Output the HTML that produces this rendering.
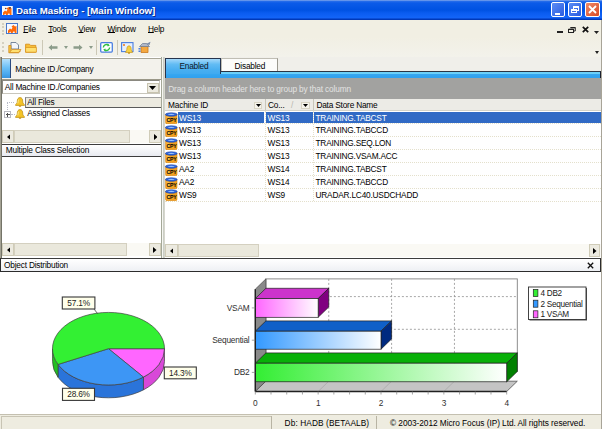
<!DOCTYPE html>
<html><head><meta charset="utf-8">
<style>
*{margin:0;padding:0;box-sizing:border-box}
html,body{width:602px;height:429px;overflow:hidden;background:#ECE9D8;font-family:"Liberation Sans",sans-serif;font-size:8.3px;letter-spacing:-0.2px;color:#000}
.a{position:absolute}
.t{position:absolute;white-space:nowrap;line-height:1}
</style></head><body>
<div class="a" style="left:0;top:0;width:602px;height:429px;overflow:hidden">

<!-- TITLE BAR -->
<div class="a" style="left:0;top:0;width:602px;height:20px;background:linear-gradient(to bottom,#9DB9EB 0px,#2A6FEA 1px,#0C5BE8 3px,#0052E2 10px,#0A5CF0 13px,#1465F8 18px,#0038B8 19px,#0038B8 20px)"></div>
<svg class="a" style="left:2px;top:5.5px" width="11" height="9.5" viewBox="0 0 11 9.5"><rect x="0" y="0" width="10.8" height="9.2" fill="#F4F8FF"/><path d="M1 9V6.5L3 4.5L4.5 5.5L5.5 3.5L4.5 2.5L6.5 1L8 2.5L9.5 2V9H8L7 7L5.5 9H4L3.5 7.5L2 9Z" fill="#FF6A08"/><circle cx="8" cy="1.8" r="0.9" fill="#301010"/><circle cx="3.8" cy="2.5" r="0.7" fill="#602010"/></svg>
<div class="t" style="left:16px;top:6px;font-size:9.7px;font-weight:bold;letter-spacing:0;color:#fff;text-shadow:1px 1px 0 #0A2A8A">Data Masking - [Main Window]</div>
<!-- window buttons -->
<div class="a" style="left:551px;top:2px;width:14px;height:15px;border:1px solid #fff;border-radius:2px;background:linear-gradient(135deg,#5C8DF5,#2A5CE0)"></div>
<div class="a" style="left:554.5px;top:12.5px;width:5px;height:2px;background:#fff"></div>
<div class="a" style="left:568px;top:2px;width:14px;height:15px;border:1px solid #fff;border-radius:2px;background:linear-gradient(135deg,#5C8DF5,#2A5CE0)"></div>
<div class="a" style="left:573px;top:6px;width:5.5px;height:4.5px;border:1px solid #fff;border-top-width:2px"></div>
<div class="a" style="left:571px;top:8.5px;width:5.5px;height:4.5px;border:1px solid #fff;border-top-width:2px;background:#3A6AE8"></div>
<div class="a" style="left:585px;top:2px;width:15px;height:15px;border:1px solid #fff;border-radius:2px;background:linear-gradient(135deg,#F08A6A,#D84A22)"></div>
<svg class="a" style="left:588px;top:5px" width="9" height="9" viewBox="0 0 9 9"><path d="M1 1L8 8M8 1L1 8" stroke="#fff" stroke-width="1.8"/></svg>

<!-- MENU BAR -->
<div class="a" style="left:0;top:20px;width:602px;height:17px;background:#F1EFE3"></div>
<div class="a" style="left:2px;top:23px;width:2px;height:12px;border-left:2px dotted #D4D0C0"></div>
<svg class="a" style="left:6px;top:23px" width="12" height="11" viewBox="0 0 12 11"><rect x="0.5" y="0.5" width="11" height="10" fill="#F4F8FF" stroke="#4A78C8"/><path d="M2 10V7.5L4 5.5L5.5 6.5L6.5 4.5L5.5 3.5L7.5 2L9 3.5L10.5 3V10H9L8 8L6.5 10H5L4.5 8.5L3 10Z" fill="#FF6A08"/></svg>
<div class="t" style="left:23.3px;top:25.4px;font-size:8.3px"><u style="text-decoration-thickness:1px;text-underline-offset:0px">F</u>ile</div>
<div class="t" style="left:48.2px;top:25.4px;font-size:8.3px"><u style="text-decoration-thickness:1px;text-underline-offset:0px">T</u>ools</div>
<div class="t" style="left:78.3px;top:25.4px;font-size:8.3px"><u style="text-decoration-thickness:1px;text-underline-offset:0px">V</u>iew</div>
<div class="t" style="left:107.4px;top:25.4px;font-size:8.3px"><u style="text-decoration-thickness:1px;text-underline-offset:0px">W</u>indow</div>
<div class="t" style="left:148px;top:25.4px;font-size:8.3px"><u style="text-decoration-thickness:1px;text-underline-offset:0px">H</u>elp</div>
<div class="a" style="left:557px;top:31px;width:5.5px;height:2px;background:#222"></div>
<svg class="a" style="left:568px;top:27px" width="8" height="6" viewBox="0 0 8 6"><path d="M2.5 0.75H7.25V4H6" fill="none" stroke="#222" stroke-width="1"/><path d="M2.5 0.5H7.5" stroke="#222" stroke-width="1.2"/><rect x="0.5" y="2.5" width="5" height="3" fill="none" stroke="#222" stroke-width="1"/><path d="M0.5 2.3H5.5" stroke="#222" stroke-width="1.3"/></svg>
<svg class="a" style="left:582px;top:26px" width="7" height="7" viewBox="0 0 7 7"><path d="M0.8 0.8L6.2 6.2M6.2 0.8L0.8 6.2" stroke="#111" stroke-width="1.7"/></svg>
<svg class="a" style="left:594px;top:31px" width="5" height="3" viewBox="0 0 5 3"><path d="M0 0H5L2.5 3Z" fill="#222"/></svg>

<!-- TOOLBAR -->
<div class="a" style="left:0;top:37px;width:602px;height:20px;background:linear-gradient(to bottom,#F1EFE3,#F3F2EB)"></div>
<div class="a" style="left:2px;top:42px;width:2px;height:10px;border-left:2px dotted #D4D0C0"></div>
<svg class="a" style="left:8px;top:41px" width="14" height="13" viewBox="0 0 14 13"><path d="M3 1.5H8L10.5 4V8H3Z" fill="#F4F6FA" stroke="#6A7A90" stroke-width="0.9"/><path d="M0.8 4.5H3V10H12.5L10.5 11.8H0.8Z" fill="#F8C840" stroke="#D08A20" stroke-width="0.8"/><path d="M1.5 11.5L4 8.5H13L10.5 11.5Z" fill="#FFE070" stroke="#D08A20" stroke-width="0.7"/></svg>
<svg class="a" style="left:25px;top:43px" width="12" height="10" viewBox="0 0 12 10"><path d="M0.6 1.2H4.5L5.5 2.4H10.8V9.2H0.6Z" fill="#F8C038" stroke="#D8901C" stroke-width="0.9"/><path d="M0.6 4.5H11.4V9.2H0.6Z" fill="#FFE070" stroke="#D8901C" stroke-width="0.7"/></svg>
<div class="a" style="left:42px;top:40px;width:1px;height:15px;background:#CCC8B6"></div>
<svg class="a" style="left:48px;top:44px" width="10" height="7" viewBox="0 0 10 7"><path d="M0.5 3.5L4 0.5V2.2H9.5V4.8H4V6.5Z" fill="#8C9C8A"/></svg>
<svg class="a" style="left:64px;top:46px" width="4" height="3" viewBox="0 0 4 3"><path d="M0 0H4L2 3Z" fill="#8C9C8A"/></svg>
<svg class="a" style="left:72.5px;top:44px" width="10" height="7" viewBox="0 0 10 7"><path d="M9.5 3.5L6 0.5V2.2H0.5V4.8H6V6.5Z" fill="#8C9C8A"/></svg>
<svg class="a" style="left:88.5px;top:46px" width="4" height="3" viewBox="0 0 4 3"><path d="M0 0H4L2 3Z" fill="#8C9C8A"/></svg>
<div class="a" style="left:95.5px;top:40px;width:1px;height:15px;background:#CCC8B6"></div>
<svg class="a" style="left:99.5px;top:41.5px" width="13" height="11" viewBox="0 0 13 11"><rect x="0.7" y="0.7" width="11.6" height="9.4" rx="1" fill="#FFFFFF" stroke="#4A7EE0" stroke-width="1.3"/><path d="M3.5 5.5A3 2.6 0 0 1 8.5 3.2" fill="none" stroke="#30C040" stroke-width="1.5"/><path d="M9.5 5.5A3 2.6 0 0 1 4.5 7.8" fill="none" stroke="#30C040" stroke-width="1.5"/><path d="M7.5 1.6L9.8 3.4L7.6 4.6Z" fill="#30C040"/><path d="M5.5 9.4L3.2 7.6L5.4 6.4Z" fill="#30C040"/></svg>
<div class="a" style="left:117px;top:40px;width:1px;height:15px;background:#CCC8B6"></div>
<svg class="a" style="left:121px;top:42px" width="13" height="12" viewBox="0 0 13 12"><rect x="0.6" y="0.6" width="11.4" height="9" fill="#E8F0FC" stroke="#4A7EE0" stroke-width="1.1"/><circle cx="3" cy="3" r="1.1" fill="#F08020"/><path d="M8 3.8C6.2 3.8 5.8 6 5.8 7.5L4.5 10.5H11.5L10.2 7.5C10.2 6 9.8 3.8 8 3.8Z" fill="#F6D040" stroke="#C89010" stroke-width="0.6"/><circle cx="8" cy="11" r="0.9" fill="#C89010"/></svg>
<svg class="a" style="left:138px;top:41px" width="14" height="12" viewBox="0 0 14 12"><path d="M3 5H10V11.5H3Z" fill="#F4A840" stroke="#C87820" stroke-width="0.8"/><path d="M1.5 5.5L4.5 2.5H8.5L11.5 5.5Z" fill="#B0B8C8" stroke="#6A7890" stroke-width="0.7"/><path d="M8 3L12.5 0.8L11.5 4Z" fill="#7A8AA8"/><rect x="0.5" y="7" width="2" height="1.5" fill="#4A7EE0"/><rect x="0.5" y="9.5" width="2" height="1.5" fill="#4A7EE0"/></svg>
<svg class="a" style="left:594.5px;top:50.5px" width="4" height="3" viewBox="0 0 4 3"><path d="M0 0H4L2 3Z" fill="#222"/></svg>

<!-- LEFT PANEL -->
<div class="a" style="left:0;top:57px;width:162px;height:201px;background:#fff;border-left:1px solid #A4A294"></div>
<!-- header Machine ID -->
<div class="a" style="left:1px;top:58px;width:161px;height:22px;background:#F3F2EC;border-top:1px solid #A8A698;border-bottom:1px solid #9A9888"></div>
<div class="a" style="left:2px;top:59px;width:9px;height:19px;background:linear-gradient(to bottom,#B4E0FC,#6CC0F6 45%,#48A8EE 80%,#3A94DC);border-right:1px solid #2A4A80"></div>
<div class="t" style="left:15.2px;top:64.7px">Machine ID./Company</div>
<!-- combo -->
<div class="a" style="left:2px;top:80px;width:157.5px;height:14px;background:#fff;border:1px solid #8A8880;border-right-color:#C8C6BC;border-bottom-color:#C8C6BC"></div>
<div class="t" style="left:4.7px;top:83.3px">All Machine ID./Companies</div>
<div class="a" style="left:146.5px;top:83px;width:12px;height:10px;background:#ECEAE0;border:1px solid #C8C4B0"></div>
<svg class="a" style="left:149px;top:86px" width="7" height="4" viewBox="0 0 7 4"><path d="M0 0H7L3.5 4Z" fill="#000"/></svg>
<!-- tree -->
<div class="a" style="left:7px;top:102px;width:7px;height:0;border-top:1px dotted #B8BCC8"></div>
<div class="a" style="left:7px;top:102px;width:0;height:10px;border-left:1px dotted #B8BCC8"></div>
<div class="a" style="left:25px;top:97px;width:136.5px;height:10.5px;background:#ECEAE0;border:1px solid #5A5A5A;border-top-color:#A0A0A0;border-left-color:#808080"></div>
<svg class="a" style="left:15px;top:96.8px" width="10" height="10" viewBox="0 0 10 10"><path d="M5 0.6C3 0.6 2.3 2.4 2.3 4.2C2.3 6 1.6 6.8 0.6 7.6V8.4H9.4V7.6C8.4 6.8 7.7 6 7.7 4.2C7.7 2.4 7 0.6 5 0.6Z" fill="#F4C428" stroke="#B88A10" stroke-width="0.7"/><path d="M3.4 2.6C3.2 3.5 3.2 5 2.8 6.4" stroke="#FFF0A0" stroke-width="0.8" fill="none"/><ellipse cx="5" cy="9.1" rx="1.3" ry="0.8" fill="#D09A18"/></svg>
<div class="t" style="left:27.2px;top:97.6px">All Files</div>
<div class="a" style="left:4px;top:111px;width:7px;height:7px;border:1px solid #B8B8C0;background:#fff"></div>
<div class="a" style="left:5.5px;top:114px;width:4px;height:1px;background:#505050"></div>
<div class="a" style="left:7px;top:112.5px;width:1px;height:4px;background:#505050"></div>
<div class="a" style="left:11px;top:114px;width:4px;height:0;border-top:1px dotted #B8BCC8"></div>
<svg class="a" style="left:15px;top:109.2px" width="10" height="10" viewBox="0 0 10 10"><path d="M5 0.6C3 0.6 2.3 2.4 2.3 4.2C2.3 6 1.6 6.8 0.6 7.6V8.4H9.4V7.6C8.4 6.8 7.7 6 7.7 4.2C7.7 2.4 7 0.6 5 0.6Z" fill="#F4C428" stroke="#B88A10" stroke-width="0.7"/><path d="M3.4 2.6C3.2 3.5 3.2 5 2.8 6.4" stroke="#FFF0A0" stroke-width="0.8" fill="none"/><ellipse cx="5" cy="9.1" rx="1.3" ry="0.8" fill="#D09A18"/></svg>
<div class="t" style="left:27.2px;top:109.4px">Assigned Classes</div>
<!-- scrollbar 1 -->
<div class="a" style="left:1px;top:130px;width:161px;height:12.5px;background:#FAF9F4"></div>
<div class="a" style="left:2px;top:130px;width:12px;height:12.5px;background:#ECEAE0;border:1px solid #D0CCB8"></div>
<svg class="a" style="left:6.5px;top:133.5px" width="3.5" height="6" viewBox="0 0 3.5 6"><path d="M3.5 0V6L0 3Z" fill="#000"/></svg>
<div class="a" style="left:14px;top:130px;width:115.5px;height:12.5px;background:#EAE8DC;border:1px solid #D4D0C0"></div>
<div class="a" style="left:148.6px;top:130px;width:12.7px;height:12.5px;background:#ECEAE0;border:1px solid #D0CCB8"></div>
<svg class="a" style="left:153.5px;top:133.5px" width="3.5" height="6" viewBox="0 0 3.5 6"><path d="M0 0V6L3.5 3Z" fill="#000"/></svg>
<!-- Multiple class selection header -->
<div class="a" style="left:1px;top:143.5px;width:160.5px;height:13px;background:linear-gradient(to bottom,#FFFFFF,#E8EAF0);border:1px solid #3C3C3C;border-left-color:#909090"></div>
<div class="t" style="left:5.8px;top:146.3px">Multiple Class Selection</div>
<!-- scrollbar 2 -->
<div class="a" style="left:1px;top:243px;width:161px;height:13px;background:#FAF9F4"></div>
<div class="a" style="left:2px;top:243px;width:12px;height:13px;background:#ECEAE0;border:1px solid #D0CCB8"></div>
<svg class="a" style="left:6.5px;top:246.5px" width="3.5" height="6" viewBox="0 0 3.5 6"><path d="M3.5 0V6L0 3Z" fill="#000"/></svg>
<div class="a" style="left:14px;top:243px;width:112.6px;height:13px;background:#EAE8DC;border:1px solid #D4D0C0"></div>
<div class="a" style="left:148.6px;top:243px;width:12px;height:13px;background:#ECEAE0;border:1px solid #D0CCB8"></div>
<svg class="a" style="left:153.0px;top:246.5px" width="3.5" height="6" viewBox="0 0 3.5 6"><path d="M0 0V6L3.5 3Z" fill="#000"/></svg>

<div class="a" style="left:0;top:57px;width:1px;height:201px;background:#A4A294"></div><div class="a" style="left:1px;top:57px;width:1px;height:201px;background:#747468"></div>
<!-- splitter -->
<div class="a" style="left:161px;top:57px;width:1px;height:201px;background:#A4A898"></div><div class="a" style="left:162px;top:57px;width:1px;height:201px;background:#F6F6F2"></div><div class="a" style="left:163px;top:57px;width:1px;height:201px;background:#CACEC4"></div>

<!-- RIGHT PANEL -->
<div class="a" style="left:164px;top:57px;width:437px;height:201px;background:#fff;border-left:1px solid #D6D6CE"></div>
<div class="a" style="left:165px;top:57px;width:436px;height:15px;background:#F0EFEA"></div>
<div class="a" style="left:221.4px;top:57.6px;width:57px;height:14.4px;background:#FCFCFA;border:1px solid #C0BEB4;border-right-color:#9A988E;border-bottom:none"></div>
<div class="t" style="left:234.5px;top:62.3px">Disabled</div>
<div class="a" style="left:165px;top:71px;width:436px;height:7.5px;background:linear-gradient(to bottom,#6CD0FA 0px,#6CD0FA 1.5px,#36A6F0 2.5px,#30A0EE 100%);border:1px solid #2A3444;border-right-color:#1A2030"></div>
<div class="a" style="left:165.2px;top:57.5px;width:56.2px;height:16px;background:linear-gradient(to bottom,#A4D8FA 0%,#62BCF4 35%,#48AEF0 75%,#40AAF0 100%);border:1px solid #26344E;border-bottom:none"></div>
<div class="t" style="left:179.4px;top:62.3px;color:#101828">Enabled</div>
<div class="a" style="left:165px;top:78px;width:436px;height:21px;background:#A2A2A0"></div>
<div class="t" style="left:168.2px;top:84.7px;color:#E2E2E2;font-size:8.3px;letter-spacing:-0.15px">Drag a column header here to group by that column</div>
<!-- column header -->
<div class="a" style="left:165px;top:98.5px;width:436px;height:12.6px;background:#ECEBE6;border-bottom:1px solid #D4D2C8"></div>
<div class="t" style="left:168.1px;top:100.7px">Machine ID</div>
<div class="a" style="left:254px;top:101.5px;width:8.4px;height:7.5px;background:#F6F4EC;border:1px solid #D8D4C4"></div>
<svg class="a" style="left:255.5px;top:104px" width="5" height="3" viewBox="0 0 5 3"><path d="M0 0H5L2.5 3Z" fill="#000"/></svg>
<div class="a" style="left:264.5px;top:99px;width:1px;height:11px;background:#C8C6BA"></div>
<div class="t" style="left:268px;top:100.7px">Co...</div>
<div class="t" style="left:291px;top:100.7px;color:#B8B6AE">/</div>
<div class="a" style="left:300.6px;top:101.5px;width:9px;height:7.5px;background:#F6F4EC;border:1px solid #D8D4C4"></div>
<svg class="a" style="left:302.5px;top:104px" width="5" height="3" viewBox="0 0 5 3"><path d="M0 0H5L2.5 3Z" fill="#000"/></svg>
<div class="a" style="left:312.5px;top:99px;width:1px;height:11px;background:#C8C6BA"></div>
<div class="t" style="left:316.4px;top:100.7px">Data Store Name</div>
<!-- rows -->
<div id="rows"><div class="a" style="left:178px;top:111.70px;width:86px;height:11.6px;background:#316AC5"></div>
<div class="a" style="left:266px;top:111.70px;width:46.5px;height:11.6px;background:#316AC5"></div>
<div class="a" style="left:313.5px;top:111.70px;width:287.5px;height:11.6px;background:#316AC5"></div>
<div class="a" style="left:165px;top:123.32px;width:436px;height:0;border-top:1px dotted #E4E0CC"></div>
<svg class="a" style="left:165.2px;top:111.90px" width="12.6" height="12" viewBox="0 0 12.6 12"><path d="M0.6 2.6V10.2Q0.6 11.7 2.2 11.7H10.4Q12 11.7 12 10.2V2.6Z" fill="#F2A020" stroke="#D88410" stroke-width="0.6"/><rect x="1.4" y="4" width="3" height="6.5" fill="#FFC850" opacity="0.6"/><ellipse cx="6.3" cy="2.5" rx="5.9" ry="1.8" fill="#2A62DC" stroke="#173C98" stroke-width="0.5"/><ellipse cx="6.3" cy="2.3" rx="3.4" ry="0.6" fill="#9CC4FA"/><text x="1.6" y="9.8" font-family="Liberation Sans" font-size="5.2" font-weight="bold" fill="#000" letter-spacing="-0.3">CPY</text></svg>
<div class="t" style="left:179px;top:113.50px;color:#fff">WS13</div>
<div class="t" style="left:267.5px;top:113.50px;color:#fff">WS13</div>
<div class="t" style="left:315.5px;top:113.50px;color:#fff">TRAINING.TABCST</div>
<div class="a" style="left:165px;top:136.24px;width:436px;height:0;border-top:1px dotted #E4E0CC"></div>
<svg class="a" style="left:165.2px;top:124.82px" width="12.6" height="12" viewBox="0 0 12.6 12"><path d="M0.6 2.6V10.2Q0.6 11.7 2.2 11.7H10.4Q12 11.7 12 10.2V2.6Z" fill="#F2A020" stroke="#D88410" stroke-width="0.6"/><rect x="1.4" y="4" width="3" height="6.5" fill="#FFC850" opacity="0.6"/><ellipse cx="6.3" cy="2.5" rx="5.9" ry="1.8" fill="#2A62DC" stroke="#173C98" stroke-width="0.5"/><ellipse cx="6.3" cy="2.3" rx="3.4" ry="0.6" fill="#9CC4FA"/><text x="1.6" y="9.8" font-family="Liberation Sans" font-size="5.2" font-weight="bold" fill="#000" letter-spacing="-0.3">CPY</text></svg>
<div class="t" style="left:179px;top:126.42px;color:#000">WS13</div>
<div class="t" style="left:267.5px;top:126.42px;color:#000">WS13</div>
<div class="t" style="left:315.5px;top:126.42px;color:#000">TRAINING.TABCCD</div>
<div class="a" style="left:165px;top:149.16px;width:436px;height:0;border-top:1px dotted #E4E0CC"></div>
<svg class="a" style="left:165.2px;top:137.74px" width="12.6" height="12" viewBox="0 0 12.6 12"><path d="M0.6 2.6V10.2Q0.6 11.7 2.2 11.7H10.4Q12 11.7 12 10.2V2.6Z" fill="#F2A020" stroke="#D88410" stroke-width="0.6"/><rect x="1.4" y="4" width="3" height="6.5" fill="#FFC850" opacity="0.6"/><ellipse cx="6.3" cy="2.5" rx="5.9" ry="1.8" fill="#2A62DC" stroke="#173C98" stroke-width="0.5"/><ellipse cx="6.3" cy="2.3" rx="3.4" ry="0.6" fill="#9CC4FA"/><text x="1.6" y="9.8" font-family="Liberation Sans" font-size="5.2" font-weight="bold" fill="#000" letter-spacing="-0.3">CPY</text></svg>
<div class="t" style="left:179px;top:139.34px;color:#000">WS13</div>
<div class="t" style="left:267.5px;top:139.34px;color:#000">WS13</div>
<div class="t" style="left:315.5px;top:139.34px;color:#000">TRAINING.SEQ.LON</div>
<div class="a" style="left:165px;top:162.08px;width:436px;height:0;border-top:1px dotted #E4E0CC"></div>
<svg class="a" style="left:165.2px;top:150.66px" width="12.6" height="12" viewBox="0 0 12.6 12"><path d="M0.6 2.6V10.2Q0.6 11.7 2.2 11.7H10.4Q12 11.7 12 10.2V2.6Z" fill="#F2A020" stroke="#D88410" stroke-width="0.6"/><rect x="1.4" y="4" width="3" height="6.5" fill="#FFC850" opacity="0.6"/><ellipse cx="6.3" cy="2.5" rx="5.9" ry="1.8" fill="#2A62DC" stroke="#173C98" stroke-width="0.5"/><ellipse cx="6.3" cy="2.3" rx="3.4" ry="0.6" fill="#9CC4FA"/><text x="1.6" y="9.8" font-family="Liberation Sans" font-size="5.2" font-weight="bold" fill="#000" letter-spacing="-0.3">CPY</text></svg>
<div class="t" style="left:179px;top:152.26px;color:#000">WS13</div>
<div class="t" style="left:267.5px;top:152.26px;color:#000">WS13</div>
<div class="t" style="left:315.5px;top:152.26px;color:#000">TRAINING.VSAM.ACC</div>
<div class="a" style="left:165px;top:175.00px;width:436px;height:0;border-top:1px dotted #E4E0CC"></div>
<svg class="a" style="left:165.2px;top:163.58px" width="12.6" height="12" viewBox="0 0 12.6 12"><path d="M0.6 2.6V10.2Q0.6 11.7 2.2 11.7H10.4Q12 11.7 12 10.2V2.6Z" fill="#F2A020" stroke="#D88410" stroke-width="0.6"/><rect x="1.4" y="4" width="3" height="6.5" fill="#FFC850" opacity="0.6"/><ellipse cx="6.3" cy="2.5" rx="5.9" ry="1.8" fill="#2A62DC" stroke="#173C98" stroke-width="0.5"/><ellipse cx="6.3" cy="2.3" rx="3.4" ry="0.6" fill="#9CC4FA"/><text x="1.6" y="9.8" font-family="Liberation Sans" font-size="5.2" font-weight="bold" fill="#000" letter-spacing="-0.3">CPY</text></svg>
<div class="t" style="left:179px;top:165.18px;color:#000">AA2</div>
<div class="t" style="left:267.5px;top:165.18px;color:#000">WS14</div>
<div class="t" style="left:315.5px;top:165.18px;color:#000">TRAINING.TABCST</div>
<div class="a" style="left:165px;top:187.92px;width:436px;height:0;border-top:1px dotted #E4E0CC"></div>
<svg class="a" style="left:165.2px;top:176.50px" width="12.6" height="12" viewBox="0 0 12.6 12"><path d="M0.6 2.6V10.2Q0.6 11.7 2.2 11.7H10.4Q12 11.7 12 10.2V2.6Z" fill="#F2A020" stroke="#D88410" stroke-width="0.6"/><rect x="1.4" y="4" width="3" height="6.5" fill="#FFC850" opacity="0.6"/><ellipse cx="6.3" cy="2.5" rx="5.9" ry="1.8" fill="#2A62DC" stroke="#173C98" stroke-width="0.5"/><ellipse cx="6.3" cy="2.3" rx="3.4" ry="0.6" fill="#9CC4FA"/><text x="1.6" y="9.8" font-family="Liberation Sans" font-size="5.2" font-weight="bold" fill="#000" letter-spacing="-0.3">CPY</text></svg>
<div class="t" style="left:179px;top:178.10px;color:#000">AA2</div>
<div class="t" style="left:267.5px;top:178.10px;color:#000">WS14</div>
<div class="t" style="left:315.5px;top:178.10px;color:#000">TRAINING.TABCCD</div>
<div class="a" style="left:165px;top:200.84px;width:436px;height:0;border-top:1px dotted #E4E0CC"></div>
<svg class="a" style="left:165.2px;top:189.42px" width="12.6" height="12" viewBox="0 0 12.6 12"><path d="M0.6 2.6V10.2Q0.6 11.7 2.2 11.7H10.4Q12 11.7 12 10.2V2.6Z" fill="#F2A020" stroke="#D88410" stroke-width="0.6"/><rect x="1.4" y="4" width="3" height="6.5" fill="#FFC850" opacity="0.6"/><ellipse cx="6.3" cy="2.5" rx="5.9" ry="1.8" fill="#2A62DC" stroke="#173C98" stroke-width="0.5"/><ellipse cx="6.3" cy="2.3" rx="3.4" ry="0.6" fill="#9CC4FA"/><text x="1.6" y="9.8" font-family="Liberation Sans" font-size="5.2" font-weight="bold" fill="#000" letter-spacing="-0.3">CPY</text></svg>
<div class="t" style="left:179px;top:191.02px;color:#000">WS9</div>
<div class="t" style="left:267.5px;top:191.02px;color:#000">WS9</div>
<div class="t" style="left:315.5px;top:191.02px;color:#000">URADAR.LC40.USDCHADD</div>
<div class="a" style="left:264.5px;top:111px;width:0;height:90px;border-left:1px dotted #E4E0CC"></div>
<div class="a" style="left:312.5px;top:111px;width:0;height:90px;border-left:1px dotted #E4E0CC"></div></div><!--/rows-->
<!-- right scrollbar -->
<div class="a" style="left:165px;top:244.4px;width:436px;height:12.3px;background:#FAF9F4"></div>
<div class="a" style="left:165px;top:244.4px;width:13px;height:12.3px;background:#ECEAE0;border:1px solid #D0CCB8"></div>
<svg class="a" style="left:169.5px;top:247.8px" width="3.5" height="6" viewBox="0 0 3.5 6"><path d="M3.5 0V6L0 3Z" fill="#000"/></svg>
<div class="a" style="left:178px;top:244.4px;width:81px;height:12.3px;background:#EAE8DC;border:1px solid #D4D0C0"></div>
<div class="a" style="left:588.5px;top:244.4px;width:11.5px;height:12.3px;background:#ECEAE0;border:1px solid #D0CCB8"></div>
<svg class="a" style="left:593.0px;top:247.8px" width="3.5" height="6" viewBox="0 0 3.5 6"><path d="M0 0V6L3.5 3Z" fill="#000"/></svg>

<!-- OBJECT DISTRIBUTION -->
<div class="a" style="left:0;top:258px;width:601px;height:13.6px;background:linear-gradient(to bottom,#FFFFFF,#EEF0F4);border:1px solid #2C2C2C;border-top-color:#3C3C3C"></div>
<div class="t" style="left:4px;top:260.9px">Object Distribution</div>
<svg class="a" style="left:586.5px;top:261.5px" width="7" height="7" viewBox="0 0 7 7"><path d="M0.8 0.8L6.2 6.2M6.2 0.8L0.8 6.2" stroke="#111" stroke-width="1.3"/></svg>
<div class="a" style="left:0;top:271.6px;width:601px;height:142.4px;background:#fff"></div>
<div id="charts"><svg class="a" style="left:0;top:0" width="602" height="429" viewBox="0 0 602 429" font-family="Liberation Sans"><defs><linearGradient id="gV" x1="0" y1="0" x2="1" y2="0"><stop offset="0" stop-color="#FF66FF"/><stop offset="1" stop-color="#FFFFFF"/></linearGradient><linearGradient id="gS" x1="0" y1="0" x2="1" y2="0"><stop offset="0" stop-color="#3399FF"/><stop offset="1" stop-color="#FFFFFF"/></linearGradient><linearGradient id="gD" x1="0" y1="0" x2="1" y2="0"><stop offset="0" stop-color="#33EE33"/><stop offset="1" stop-color="#FFFFFF"/></linearGradient></defs><path d="M164.50 348.70 A56.0 36.3 0 0 1 143.41 377.08 L143.41 389.88 A56.0 36.3 0 0 0 164.50 361.50 Z" fill="#D848D8" stroke="#404040" stroke-width="0.7"/>
<path d="M143.41 377.08 A56.0 36.3 0 0 1 58.04 364.45 L58.04 377.25 A56.0 36.3 0 0 0 143.41 389.88 Z" fill="#2A74DA" stroke="#404040" stroke-width="0.7"/>
<path d="M58.04 364.45 A56.0 36.3 0 0 1 52.50 348.70 L52.50 361.50 A56.0 36.3 0 0 0 58.04 377.25 Z" fill="#22C022" stroke="#404040" stroke-width="0.7"/>
<path d="M108.5 348.7 L164.50 348.70 A56.0 36.3 0 0 1 143.41 377.08 Z" fill="#FF66FF" stroke="#404040" stroke-width="0.7"/>
<path d="M108.5 348.7 L143.41 377.08 A56.0 36.3 0 0 1 58.04 364.45 Z" fill="#3D96F5" stroke="#404040" stroke-width="0.7"/>
<path d="M108.5 348.7 L58.04 364.45 A56.0 36.3 0 1 1 164.50 348.70 Z" fill="#33F033" stroke="#404040" stroke-width="0.7"/>
<path d="M94 309L97.5 313.5" stroke="#404040" stroke-width="0.8" fill="none"/>
<rect x="62.3" y="297" width="32.60" height="12.00" fill="#FFFFEA" stroke="#383838" stroke-width="1.1"/>
<text x="78.60" y="306.00" text-anchor="middle" font-size="8.3" fill="#1A1A1A">57.1%</text>
<rect x="164.3" y="367" width="32.00" height="11.80" fill="#FFFFEA" stroke="#383838" stroke-width="1.1"/>
<text x="180.30" y="375.80" text-anchor="middle" font-size="8.3" fill="#1A1A1A">14.3%</text>
<rect x="62.5" y="388.3" width="32.00" height="12.10" fill="#FFFFEA" stroke="#383838" stroke-width="1.1"/>
<text x="78.50" y="397.40" text-anchor="middle" font-size="8.3" fill="#1A1A1A">28.6%</text>
<rect x="265.90000000000003" y="278.9" width="251.39999999999998" height="92.69999999999999" fill="#FFFFFF" stroke="#808080" stroke-width="0.9"/>
<path d="M255.3 289.2 L265.90000000000003 278.9 L265.90000000000003 381.2 L255.3 391.5 Z" fill="#8A8A8A" stroke="#404040" stroke-width="0.7"/>
<path d="M255.3 391.5 L265.90000000000003 381.2 L517.3 381.2 L506.7 391.5 Z" fill="#C4C4C4" stroke="#404040" stroke-width="0.7"/>
<line x1="328.75" y1="278.9" x2="328.75" y2="381.2" stroke="#909090" stroke-width="0.8" stroke-dasharray="2 2"/>
<line x1="318.15" y1="391.5" x2="328.75" y2="381.2" stroke="#A0A0A0" stroke-width="0.6"/>
<line x1="391.60" y1="278.9" x2="391.60" y2="381.2" stroke="#909090" stroke-width="0.8" stroke-dasharray="2 2"/>
<line x1="381.00" y1="391.5" x2="391.60" y2="381.2" stroke="#A0A0A0" stroke-width="0.6"/>
<line x1="454.45" y1="278.9" x2="454.45" y2="381.2" stroke="#909090" stroke-width="0.8" stroke-dasharray="2 2"/>
<line x1="443.85" y1="391.5" x2="454.45" y2="381.2" stroke="#A0A0A0" stroke-width="0.6"/>
<line x1="265.90000000000003" y1="296.6" x2="517.3" y2="296.6" stroke="#909090" stroke-width="0.8" stroke-dasharray="2 2"/>
<line x1="265.90000000000003" y1="329.3" x2="517.3" y2="329.3" stroke="#909090" stroke-width="0.8" stroke-dasharray="2 2"/>
<line x1="265.90000000000003" y1="362.0" x2="517.3" y2="362.0" stroke="#909090" stroke-width="0.8" stroke-dasharray="2 2"/>
<path d="M255.3 298.6 L265.90000000000003 288.3 L328.75 288.3 L318.15 298.6 Z" fill="#CC33CC" stroke="#202020" stroke-width="0.7"/>
<path d="M318.15 298.6 L328.75 288.3 L328.75 307.0 L318.15 317.3 Z" fill="#800080" stroke="#202020" stroke-width="0.7"/>
<rect x="255.3" y="298.6" width="62.85" height="18.70" fill="url(#gV)" stroke="#202020" stroke-width="0.7"/>
<path d="M255.3 331.2 L265.90000000000003 320.9 L391.6 320.9 L381.0 331.2 Z" fill="#1060C8" stroke="#202020" stroke-width="0.7"/>
<path d="M381.0 331.2 L391.6 320.9 L391.6 338.9 L381.0 349.2 Z" fill="#002A80" stroke="#202020" stroke-width="0.7"/>
<rect x="255.3" y="331.2" width="125.70" height="18.00" fill="url(#gS)" stroke="#202020" stroke-width="0.7"/>
<path d="M255.3 363.2 L265.90000000000003 352.9 L517.3 352.9 L506.7 363.2 Z" fill="#08B008" stroke="#202020" stroke-width="0.7"/>
<path d="M506.7 363.2 L517.3 352.9 L517.3 371.5 L506.7 381.8 Z" fill="#008000" stroke="#202020" stroke-width="0.7"/>
<rect x="255.3" y="363.2" width="251.40" height="18.60" fill="url(#gD)" stroke="#202020" stroke-width="0.7"/>
<line x1="255.3" y1="289.2" x2="255.3" y2="391.5" stroke="#202020" stroke-width="1.4"/>
<line x1="255.3" y1="391.5" x2="506.7" y2="391.5" stroke="#202020" stroke-width="1.4"/>
<line x1="255.30" y1="391.5" x2="255.30" y2="394.5" stroke="#808080" stroke-width="0.7"/>
<line x1="271.01" y1="391.5" x2="271.01" y2="394.5" stroke="#808080" stroke-width="0.7"/>
<line x1="286.73" y1="391.5" x2="286.73" y2="394.5" stroke="#808080" stroke-width="0.7"/>
<line x1="302.44" y1="391.5" x2="302.44" y2="394.5" stroke="#808080" stroke-width="0.7"/>
<line x1="318.15" y1="391.5" x2="318.15" y2="394.5" stroke="#808080" stroke-width="0.7"/>
<line x1="333.86" y1="391.5" x2="333.86" y2="394.5" stroke="#808080" stroke-width="0.7"/>
<line x1="349.57" y1="391.5" x2="349.57" y2="394.5" stroke="#808080" stroke-width="0.7"/>
<line x1="365.29" y1="391.5" x2="365.29" y2="394.5" stroke="#808080" stroke-width="0.7"/>
<line x1="381.00" y1="391.5" x2="381.00" y2="394.5" stroke="#808080" stroke-width="0.7"/>
<line x1="396.71" y1="391.5" x2="396.71" y2="394.5" stroke="#808080" stroke-width="0.7"/>
<line x1="412.43" y1="391.5" x2="412.43" y2="394.5" stroke="#808080" stroke-width="0.7"/>
<line x1="428.14" y1="391.5" x2="428.14" y2="394.5" stroke="#808080" stroke-width="0.7"/>
<line x1="443.85" y1="391.5" x2="443.85" y2="394.5" stroke="#808080" stroke-width="0.7"/>
<line x1="459.56" y1="391.5" x2="459.56" y2="394.5" stroke="#808080" stroke-width="0.7"/>
<line x1="475.27" y1="391.5" x2="475.27" y2="394.5" stroke="#808080" stroke-width="0.7"/>
<line x1="490.99" y1="391.5" x2="490.99" y2="394.5" stroke="#808080" stroke-width="0.7"/>
<line x1="506.70" y1="391.5" x2="506.70" y2="394.5" stroke="#808080" stroke-width="0.7"/>
<text x="255.30" y="406" text-anchor="middle" font-size="8.3" fill="#303030">0</text>
<text x="318.15" y="406" text-anchor="middle" font-size="8.3" fill="#303030">1</text>
<text x="381.00" y="406" text-anchor="middle" font-size="8.3" fill="#303030">2</text>
<text x="443.85" y="406" text-anchor="middle" font-size="8.3" fill="#303030">3</text>
<text x="506.70" y="406" text-anchor="middle" font-size="8.3" fill="#303030">4</text>
<line x1="251.8" y1="307.9" x2="255.3" y2="307.9" stroke="#808080" stroke-width="0.7"/>
<text x="249.5" y="310.9" text-anchor="end" font-size="8.3" fill="#303030">VSAM</text>
<line x1="251.8" y1="340.2" x2="255.3" y2="340.2" stroke="#808080" stroke-width="0.7"/>
<text x="249.5" y="343.2" text-anchor="end" font-size="8.3" fill="#303030">Sequential</text>
<line x1="251.8" y1="372.4" x2="255.3" y2="372.4" stroke="#808080" stroke-width="0.7"/>
<text x="249.5" y="375.4" text-anchor="end" font-size="8.3" fill="#303030">DB2</text>
<rect x="529.5" y="288" width="57.5" height="32.5" fill="#505050"/>
<rect x="528.5" y="287" width="57.5" height="32.5" fill="#FFFFFF" stroke="#303030" stroke-width="0.9"/>
<rect x="533.3" y="289.5" width="4.6" height="7" fill="#33EE33" stroke="#202020" stroke-width="0.7"/>
<text x="540.6" y="296.1" font-size="8.2" fill="#202020" letter-spacing="-0.3">4 DB2</text>
<rect x="533.3" y="300.2" width="4.6" height="7" fill="#3399FF" stroke="#202020" stroke-width="0.7"/>
<text x="540.6" y="306.8" font-size="8.2" fill="#202020" letter-spacing="-0.3">2 Sequential</text>
<rect x="533.3" y="310.8" width="4.6" height="7" fill="#FF66FF" stroke="#202020" stroke-width="0.7"/>
<text x="540.6" y="317.40000000000003" font-size="8.2" fill="#202020" letter-spacing="-0.3">1 VSAM</text></svg></div><!--/charts-->

<!-- STATUS BAR -->
<div class="a" style="left:0;top:414px;width:602px;height:15px;background:#EEECE0;border-top:1px solid #C4C0B0"></div>
<div class="a" style="left:1px;top:416px;width:270px;height:1px;background:#C8C4B4"></div><div class="a" style="left:1px;top:416px;width:1px;height:13px;background:#C8C4B4"></div><div class="a" style="left:271px;top:416px;width:1px;height:13px;background:#B8B4A4"></div>
<div class="a" style="left:376px;top:416px;width:1px;height:13px;background:#B8B4A4"></div>
<div class="t" style="left:284.6px;top:419px;letter-spacing:0.1px">Db: HADB (BETAALB)</div>
<div class="t" style="left:390px;top:419px;letter-spacing:-0.05px">© 2003-2012 Micro Focus (IP) Ltd. All rights reserved.</div>
<div class="a" style="left:601px;top:20px;width:1px;height:409px;background:#A8A498"></div>
</div>
</body></html>
